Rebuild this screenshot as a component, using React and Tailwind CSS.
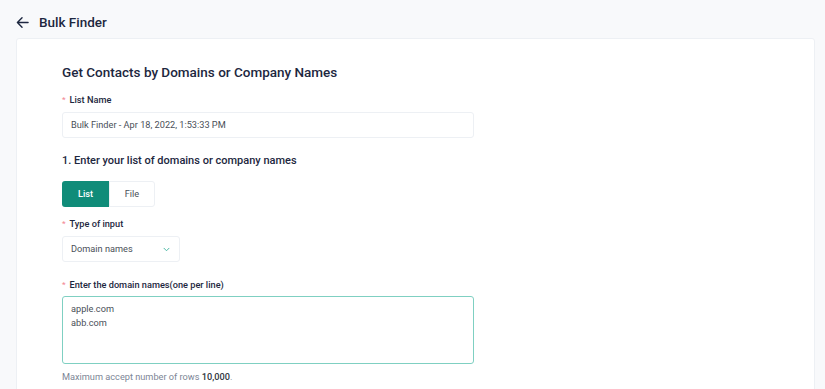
import React from "react";

function Label({ children, className = "" }) {
  return (
    <div className={"flex items-center h-4 text-[9.2px] font-medium text-[#1d2740] leading-4 " + className}>
      <span className="text-[#f38b96] mr-[4px] text-[8px] leading-none">*</span>
      {children}
    </div>
  );
}

export default function App() {
  return (
    <div className="w-[825px] h-[389px] overflow-hidden bg-[#f8f9fb] font-['Roboto',sans-serif]">
      <div className="h-[38px] flex items-center pl-[16px] pt-[6px]">
        <svg width="13" height="13" viewBox="0 0 14 14" fill="none" stroke="#1d2740" strokeWidth="1.5" strokeLinecap="round" strokeLinejoin="round">
          <path d="M13 7H1.5M6.5 2L1.5 7l5 5" />
        </svg>
        <span className="ml-[10px] text-[13.5px] font-medium text-[#1d2740] leading-5">Bulk Finder</span>
      </div>
      <div className="ml-[16px] w-[799px] h-[400px] bg-white border border-[#edf0f4] rounded-[3px] pl-[45px] pt-[23px]">
        <div className="text-[13.5px] font-medium text-[#1d2740] leading-5 h-5">Get Contacts by Domains or Company Names</div>
        <Label className="mt-[10px]">List Name</Label>
        <div className="mt-[4px] w-[412px] h-[26px] border border-[#edf0f4] rounded-[3px] flex items-center px-[8px] text-[9.2px] text-[#4a4f58]">
          Bulk Finder - Apr 18, 2022, 1:53:33 PM
        </div>
        <div className="mt-[13px] h-5 leading-5 text-[11px] font-medium text-[#1d2740]">1. Enter your list of domains or company names</div>
        <div className="mt-[10px] flex h-[26px] w-[93px]">
          <div className="w-[47px] h-full bg-[#108c79] rounded-l-[3px] flex items-center justify-center text-white text-[9.2px] font-medium">List</div>
          <div className="w-[46px] h-full border border-[#edf0f4] rounded-r-[3px] flex items-center justify-center text-[#4a4f58] text-[9.2px]">File</div>
        </div>
        <Label className="mt-[9px]">Type of input</Label>
        <div className="mt-[4px] w-[118px] h-[26px] border border-[#edf0f4] rounded-[3px] flex items-center justify-between pl-[8px] pr-[9px] text-[9.2px] text-[#4a4f58]">
          <span>Domain names</span>
          <svg width="7" height="5" viewBox="0 0 8 6" fill="none" stroke="#3eb39e" strokeWidth="1.1" strokeLinecap="round" strokeLinejoin="round">
            <path d="M1 1.5l3 3 3-3" />
          </svg>
        </div>
        <Label className="mt-[15px]">Enter the domain names(one per line)</Label>
        <div className="mt-[3px] w-[412px] h-[68px] border border-[#7fd0c2] rounded-[3px] px-[8px] pt-[5px] text-[9.2px] leading-[14px] text-[#4a4f58]">
          <div>apple.com</div>
          <div>abb.com</div>
        </div>
        <div className="mt-[5px] h-4 leading-4 text-[9.2px] text-[#7d8696]">
          Maximum accept number of rows <span className="font-medium text-[#2f3540]">10,000</span>.
        </div>
      </div>
    </div>
  );
}
